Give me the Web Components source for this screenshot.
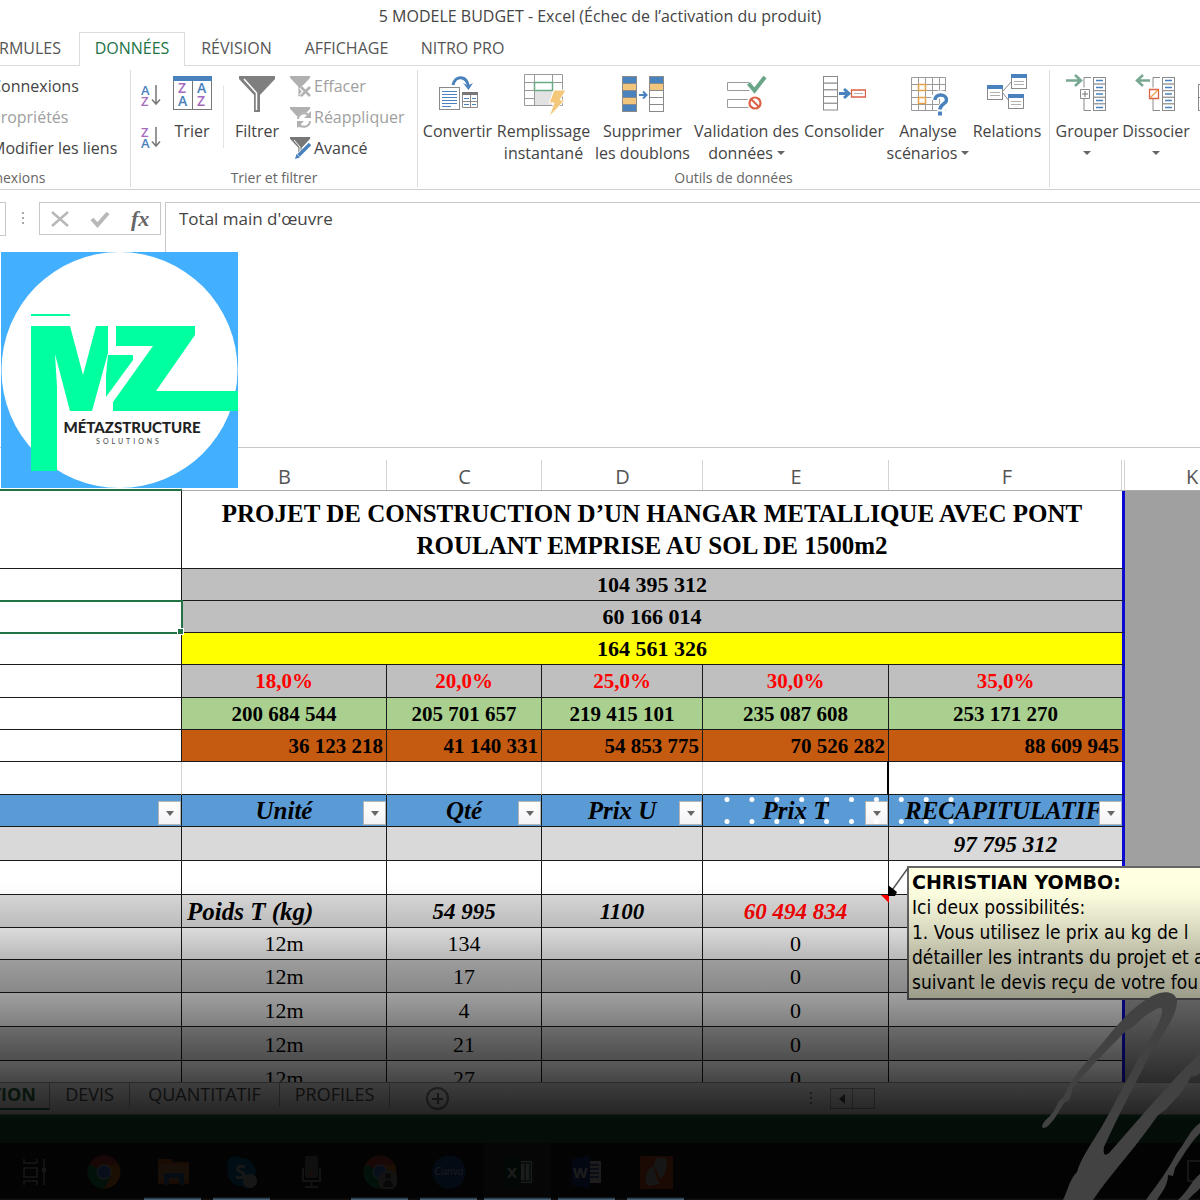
<!DOCTYPE html>
<html lang="fr">
<head>
<meta charset="utf-8">
<title>5 MODELE BUDGET - Excel</title>
<meta name="viewport" content="width=device-width, initial-scale=1">
<style>
  html, body { margin: 0; height: 100%; }
  body { font-family: "Open Sans", "Noto Sans", sans-serif; color: #444; background: #fff; overflow: hidden; }
</style>
</head>
<body>
<excel-window></excel-window>

<script>
const define = (name, html, setup) => {
  const template = document.createElement('template');
  template.innerHTML = html;
  customElements.define(name, class extends HTMLElement {
    connectedCallback() {
      if (this.shadowRoot) return;
      this.attachShadow({ mode: 'open' }).appendChild(template.content.cloneNode(true));
      if (setup) setup(this, this.shadowRoot);
    }
  });
};

/* ---------- icons ---------- */
const funnel = (c) => `<path fill="${c}" d="M0 0h36v3L21 19v17h-6V19L0 3z"/>`;
const rows = (x, y, w, n, h, fills) => Array.from({ length: n }, (_, i) =>
  `<rect x="${x}" y="${y + i * h}" width="${w}" height="${h}" fill="${(fills && fills[i]) || '#fff'}" stroke="#8a8a8a"/>`).join('');
const win = (x, y) => `<rect x="${x}.5" y="${y}.5" width="15" height="14" fill="#fff" stroke="#8a8a8a"/><path fill="#4a82bd" d="M${x} ${y}h16v4h-16z"/><path stroke="#b0b0b0" d="M${x + 3} ${y + 7.5}h10M${x + 3} ${y + 10.5}h10"/>`;
const outline = (extra) => `<path fill="none" stroke="#8a8a8a" d="M25 3.500h-7v10M18 24v12.500h7"/>${rows(27.5, 3.5, 12, 5, 6.6)}<path stroke="#4a82bd" stroke-width="1.300" d="M30 6.500h7M30 13.500h7M30 20h7M30 26.500h7M30 33.500h7"/>${extra}`;
const chrome = `<circle cx="17" cy="17" r="16.500" fill="#db4437"/><path fill="#0f9d58" d="M17 17L2.700 8.700A16.500 16.500 0 0 0 17 33.500l7-12z"/><path fill="#f58a20" d="M17 17l8 4-8 12.500A16.500 16.500 0 0 0 31.500 9.500H17z"/><circle cx="17" cy="17" r="7.500" fill="#ddd"/><circle cx="17" cy="17" r="6.500" fill="#4285f4"/>`;
const ICONS = {
  'sort-az': [20, 24, `<g font-family="Open Sans" font-weight="600" font-size="13"><text x="0" y="11" fill="#4a82bd">A</text><text x="0" y="22" fill="#a66bbe">Z</text></g><path fill="none" stroke="#777" stroke-width="1.500" d="M15 1v18M11 15.500l4 4.500 4-4.500"/>`],
  'sort-za': [20, 24, `<g font-family="Open Sans" font-weight="600" font-size="13"><text x="0" y="11" fill="#a66bbe">Z</text><text x="0" y="22" fill="#4a82bd">A</text></g><path fill="none" stroke="#777" stroke-width="1.500" d="M15 1v18M11 15.500l4 4.500 4-4.500"/>`],
  sort: [40, 40, `<rect x="1.500" y="2.500" width="38" height="33" fill="#fff" stroke="#777"/><path fill="#4a82bd" d="M1 2h39v5H1z"/><path stroke="#777" d="M20.500 7v28"/><g font-family="Open Sans" font-weight="600" font-size="14"><text x="6" y="19" fill="#a66bbe">Z</text><text x="6" y="32" fill="#4a82bd">A</text><text x="25" y="19" fill="#4a82bd">A</text><text x="25" y="32" fill="#a66bbe">Z</text></g>`],
  filter: [40, 40, `<g transform="translate(2 2)">${funnel('#7f7f7f')}</g><path fill="none" stroke="#fff" stroke-width="1.500" d="M7 5l12.500 14v17"/>`],
  clear: [22, 22, `<g transform="translate(0 1) scale(.56)">${funnel('#b0b0b0')}</g><path stroke="#fff" stroke-width="5" d="M11 12l9 9M20 12l-9 9"/><path stroke="#b0b0b0" stroke-width="2.500" d="M11 12l9 9M20 12l-9 9"/>`],
  reapply: [22, 22, `<g transform="translate(0 1) scale(.56)">${funnel('#b0b0b0')}</g><circle cx="14" cy="14" r="7.500" fill="#fff"/><path fill="none" stroke="#b0b0b0" stroke-width="2" d="M8 13a6 6 0 0 1 11-3M20 15a6 6 0 0 1-11 3"/><path fill="#b0b0b0" d="M21 5v7h-7zM7 22v-7h7z"/>`],
  advanced: [22, 22, `<g transform="translate(0 0) scale(.56)">${funnel('#777')}</g><path fill="none" stroke="#fff" d="M4 3l6 7v10"/><path stroke="#fff" stroke-width="6" d="M8 20L20 8"/><path stroke="#4a82bd" stroke-width="3.500" d="M8.500 18.500L20 7"/><path fill="#4a82bd" d="M5 22l1.500-5 3.500 3.500z"/>`],
  convert: [40, 40, `<rect x="1.500" y="13.500" width="20" height="22" fill="#fff" stroke="#8a8a8a"/><path stroke="#4a82bd" d="M4 17.500h15M4 20.500h15M4 23.500h15M4 26.500h15M4 29.500h15M4 32.500h9"/><path fill="#fff" stroke="#8a8a8a" d="M24.500 18.500h15v15h-15zM32.500 18v15M24 27.500h16"/><path fill="#777" d="M24 18h16v3H24z"/><path stroke="#4a82bd" d="M26 24.500h5M34 24.500h4M26 30.500h5M34 30.500h4"/><path fill="none" stroke="#4a82bd" stroke-width="3" d="M15 11C17 1 29 1 30.500 13"/><path fill="#4a82bd" d="M25 9l5 2.500L35 9l-4.500 7z"/>`],
  flash: [42, 44, `<path fill="#fff" stroke="#9a9a9a" d="M1.500.5h38v31h-38zM1 8.500h38M1 16.500h38M1 24.500h10M11.500 0v31M29.500 0v16"/><path fill="#e2e2e2" d="M12 17h17v14H12z"/><path fill="#fff" stroke="#6aaa85" stroke-width="1.500" d="M11.500 8.500h18v8h-18z"/><path fill="#f3c87a" stroke="#fff" d="M31 16h12l-6 10h5L26 43l5-14h-5z"/>`],
  dedupe: [44, 40, `${rows(1.5, 2.5, 14, 5, 7, ['#4a82bd', '#f1c67c', '#4a82bd', '#f1c67c', '#4a82bd'])}${rows(28.5, 2.5, 14, 5, 7, ['#4a82bd', '#f1c67c'])}<path fill="none" stroke="#4a82bd" stroke-width="2" d="M18 21h7M22 17.500l3.500 3.500-3.500 3.500"/>`],
  validate: [42, 40, `<path fill="#fff" stroke="#9a9a9a" d="M1.500 8.500h24v8h-24zM1.500 25.500h24v8h-24z"/><path fill="none" stroke="#fff" stroke-width="7" d="M22 10l7 7L39 3"/><path fill="none" stroke="#6aa588" stroke-width="4" d="M22.500 9.500l6 7L39 3"/><circle cx="29" cy="29" r="8" fill="#fff"/><circle cx="29" cy="29" r="5.500" fill="#fff" stroke="#dd6145" stroke-width="2.200"/><path stroke="#dd6145" stroke-width="2" d="M25 25l8 8"/>`],
  consolidate: [44, 40, `${rows(1.5, 2.500, 14, 5, 6.700)}<path fill="none" stroke="#4a82bd" stroke-width="3" d="M17 19.500h9M22 15l5 4.500-5 4.500"/><path fill="#fff" stroke="#dd6145" stroke-width="1.300" d="M29.500 16h14v7h-14z"/><path stroke="#b0b0b0" d="M32 19.500h9"/>`],
  whatif: [40, 42, `<path fill="#fff" stroke="#9a9a9a" d="M3.500 3.500h34v33h-34zM10.500 3v33M17.500 3v33M24.500 3v33M31.500 3v33M3 10.500h34M3 16.500h34M3 23.500h34M3 30.500h34"/><path fill="#fff" stroke="#e6a24a" stroke-width="1.500" d="M10.500 10.500h7v6h-7zM10.500 23.500h7v6h-7z"/><path fill="none" stroke="#fff" stroke-width="8" d="M27 26c0-8 13-7 12 0-.5 4-6 4-6 14"/><path fill="none" stroke="#4a82bd" stroke-width="3.500" d="M27 26c0-7 11.500-6.500 11.500 0 0 4-6.500 4-6.500 9.500"/><path fill="#4a82bd" d="M30 37.500h4v4h-4z"/>`],
  relations: [42, 40, `<path fill="none" stroke="#8a8a8a" d="M16 18L26 7M16 18l8 10"/>${win(1, 11)}${win(25, 0)}${win(22, 20)}`],
  group: [42, 40, outline(`<path fill="#fff" stroke="#8a8a8a" d="M14.500 15.500h9v9h-9z"/><path stroke="#777" d="M16 20h6M19 17v6"/><path fill="none" stroke="#78a892" stroke-width="2.500" d="M0 6.500h14M9 1l6 5.500L9 12"/>`)],
  ungroup: [42, 40, outline(`<path fill="#fff" stroke="#dd6145" stroke-width="1.300" d="M14.500 15.500h9v9h-9z"/><path stroke="#e6a24a" stroke-width="1.300" d="M15 24l8-8"/><path fill="none" stroke="#78a892" stroke-width="2.500" d="M2 6.500h13M8 1L2 6.500 8 12"/>`)],
  subtotal: [80, 40, rows(0.5, 10.5, 40, 2, 13)],
  cancel: [18, 18, `<path stroke="#b8b8b8" stroke-width="2.500" d="M1 2l16 14M17 2L1 16"/>`],
  enter: [20, 18, `<path fill="none" stroke="#b8b8b8" stroke-width="4" d="M2 9l5.500 6L18 3"/>`],
  task: [32, 34, `<path fill="none" stroke="#ccc" stroke-width="1.500" d="M5 4v4h13V4M5 13h13v9H5zM5 30v-4h13v4M25 4v26"/><path fill="#ccc" d="M23 13h4v4h-4z"/>`],
  chrome: [34, 34, chrome],
  chrome2: [34, 34, chrome + `<circle cx="25" cy="25" r="10" fill="#aaa"/><circle cx="25" cy="21" r="3" fill="#444"/><path fill="#444" d="M20 32c0-9 10-9 10 0z"/>`],
  folder: [34, 34, `<path fill="#e8601c" d="M2 4h13l2 3h16v22H2z"/><path fill="#d98a4a" d="M2 9h31v17H2z"/><path fill="#2a6da8" d="M8 18h20v12h-5v-7H13v7H8z"/>`],
  skype: [34, 34, `<circle cx="11" cy="10" r="9" fill="#0a78b8"/><circle cx="22" cy="24" r="9" fill="#0a78b8"/><circle cx="16.500" cy="17" r="14" fill="#0a78b8"/><text x="10" y="24" font-family="Open Sans" font-weight="700" font-size="20" fill="#ddd">S</text><circle cx="25" cy="26" r="7" fill="#ccc"/>`],
  mic: [34, 34, `<rect x="11" y="1" width="13" height="22" rx="2" fill="#8a8a92"/><path fill="none" stroke="#aaa" stroke-width="2" d="M9 13v13h17V13M17.500 26v6M11 32h13"/><path fill="#f05a28" d="M15 17h5l-2.500 4z"/>`],
  canva: [34, 34, `<circle cx="17" cy="17" r="16.500" fill="#1a5fb8"/><text x="17" y="20" text-anchor="middle" font-family="Lato" font-style="italic" font-size="11" fill="#cfe6ff">Canva</text>`],
  excel: [34, 34, `<path fill="#fff" d="M17 6h14v22H17z"/><path fill="none" stroke="#217346" stroke-width="1.500" d="M19 8h10v18H19zM24 8v18"/><path fill="#134d2c" d="M2 4l18-3v32L2 30z"/><text x="6" y="23" font-family="Open Sans" font-weight="700" font-size="15" fill="#fff">X</text>`],
  word: [34, 34, `<path fill="#fff" d="M17 6h14v22H17z"/><path stroke="#2b579a" stroke-width="1.500" d="M20 10h9M20 14h9M20 18h9M20 22h9"/><path fill="#1c3f9a" d="M2 4l18-3v32L2 30z"/><text x="3" y="23" font-family="Open Sans" font-weight="700" font-size="15" fill="#fff">W</text>`],
  nitro: [34, 34, `<path fill="#f0581a" d="M1 1h33v33H1z"/><path fill="#ccc" d="M7 29c-1-7 1-16 8-18l1 6 4 12-10 2zM17 3c4-1 8 0 11 1-1 8 0 15-7 20l-3-8-3-5z"/>`],
};
customElements.define('ui-icon', class extends HTMLElement {
  connectedCallback() {
    if (this.shadowRoot) return;
    const [w, h, body] = ICONS[this.getAttribute('name')];
    this.attachShadow({ mode: 'open' }).innerHTML =
      `<style>:host{display:inline-flex;flex:none}svg{display:block}</style><svg width="${w}" height="${h}" viewBox="0 0 ${w} ${h}" aria-hidden="true">${body}</svg>`;
  }
});

/* ---------- ribbon ---------- */
define('title-bar', `<style>
  :host { display: block; height: 32px; line-height: 32px; text-align: center; font-size: 16px; }
</style><slot></slot>`);

define('ribbon-tabs', `<style>
  :host { display: block; overflow: hidden; }
  nav { display: flex; height: 33px; margin-left: -36px; border-bottom: 1px solid #dcdcdc; }
  a { box-sizing: border-box; height: 34px; line-height: 33px; font-size: 16px; color: #555; text-decoration: none; white-space: nowrap; text-align: center; }
  a[aria-current] { color: #217346; background: #fff; border: 1px solid #dcdcdc; border-bottom: 0; line-height: 31px; }
  .t1 { width: 115px; padding-right: 18px; text-align: right; } .t2 { width: 106px; } .t3 { width: 103px; } .t4 { width: 117px; } .t5 { width: 115px; }
</style>
<nav aria-label="Ruban"><a class="t1" href="#formules">FORMULES</a><a class="t2" href="#donnees" aria-current="page">DONNÉES</a><a class="t3" href="#revision">RÉVISION</a><a class="t4" href="#affichage">AFFICHAGE</a><a class="t5" href="#nitro">NITRO PRO</a></nav>`);

define('ribbon-group', `<style>
  :host { display: flex; flex-direction: column; box-sizing: border-box; flex: none; height: 117px; border-right: 1px solid #dcdcdc; }
  .items { display: flex; flex: 1; }
  .label { text-align: center; font-size: 14px; line-height: 18px; color: #666; white-space: nowrap; min-height: 18px; }
</style><div class="items"><slot></slot></div><div class="label"></div>`,
  (el, root) => { root.querySelector('.label').textContent = el.getAttribute('label') || ''; });

define('ribbon-button', `<style>
  :host { display: block; flex: none; }
  button { display: flex; flex-direction: column; align-items: center; width: 100%; padding: 4px 0 0; border: 0; background: none; font: inherit; font-size: 16px; line-height: 22px; color: #444; white-space: nowrap; }
  .icon { display: flex; height: 46px; }
  .arrow::after { content: ""; display: inline-block; border: 4px solid transparent; border-top-color: #666; border-bottom: 0; margin-left: 4px; vertical-align: 4px; }
  .bare::after { margin-left: 0; }
</style><button type="button"><span class="icon"></span></button>`,
  (el, root) => {
    const icon = document.createElement('ui-icon');
    icon.setAttribute('name', el.getAttribute('icon'));
    root.querySelector('.icon').append(icon);
    const lines = el.getAttribute('label').split('|');
    lines.forEach((t, i) => {
      const s = document.createElement('span');
      s.textContent = t;
      if (el.hasAttribute('menu') && i === lines.length - 1) s.className = t ? 'arrow' : 'arrow bare';
      root.querySelector('button').append(s);
    });
  });

define('ribbon-command', `<style>
  :host { display: block; }
  button { display: flex; align-items: center; gap: 2px; height: 31px; padding: 0; border: 0; background: none; font: inherit; font-size: 16px; color: #444; white-space: nowrap; }
  button:disabled { color: #a0a0a0; }
</style><button type="button"><slot name="icon"></slot><slot></slot></button>`,
  (el, root) => { root.querySelector('button').disabled = el.hasAttribute('disabled'); });

define('ribbon-bar', `<style>
  :host { display: flex; overflow: hidden; padding-top: 4px; box-sizing: border-box; border-bottom: 1px solid #d0d0d0; height: 124px; }
  .links { width: 247px; margin-left: -116px; }
  .filters { width: 287px; } .tools { width: 632px; } .plan { width: 300px; }
  .stack { display: flex; flex-direction: column; }
  .linklist { padding-left: 107px; }
  .sorts { padding: 14px 0 0 10px; gap: 18px; }
  .sorts button { display: block; height: 24px; padding: 0; border: 0; background: none; }
  .sep { width: 1px; height: 62px; margin: 16px 0 0; background: #e3e3e3; }
  .pad { padding-left: 3px; }
</style>
<ribbon-group class="links" label="Connexions"><div class="stack linklist">
  <ribbon-command>Connexions</ribbon-command><ribbon-command disabled>Propriétés</ribbon-command><ribbon-command>Modifier les liens</ribbon-command></div></ribbon-group>
<ribbon-group class="filters" label="Trier et filtrer">
  <div class="stack sorts"><button type="button" aria-label="Trier de A à Z"><ui-icon name="sort-az"></ui-icon></button><button type="button" aria-label="Trier de Z à A"><ui-icon name="sort-za"></ui-icon></button></div>
  <ribbon-button style="width:62px" icon="sort" label="Trier"></ribbon-button>
  <div class="sep"></div>
  <ribbon-button style="width:66px" icon="filter" label="Filtrer"></ribbon-button>
  <div class="stack"><ribbon-command disabled><ui-icon slot="icon" name="clear"></ui-icon>Effacer</ribbon-command><ribbon-command disabled><ui-icon slot="icon" name="reapply"></ui-icon>Réappliquer</ribbon-command><ribbon-command><ui-icon slot="icon" name="advanced"></ui-icon>Avancé</ribbon-command></div>
</ribbon-group>
<ribbon-group class="tools" label="Outils de données"><span class="pad"></span>
  <ribbon-button style="width:73px" icon="convert" label="Convertir"></ribbon-button>
  <ribbon-button style="width:99px" icon="flash" label="Remplissage|instantané"></ribbon-button>
  <ribbon-button style="width:99px" icon="dedupe" label="Supprimer|les doublons"></ribbon-button>
  <ribbon-button style="width:109px" icon="validate" label="Validation des|données" menu></ribbon-button>
  <ribbon-button style="width:86px" icon="consolidate" label="Consolider"></ribbon-button>
  <ribbon-button style="width:82px" icon="whatif" label="Analyse|scénarios" menu></ribbon-button>
  <ribbon-button style="width:76px" icon="relations" label="Relations"></ribbon-button>
</ribbon-group>
<ribbon-group class="plan"><span class="pad"></span>
  <ribbon-button style="width:68px" icon="group" label="Grouper|" menu></ribbon-button>
  <ribbon-button style="width:70px" icon="ungroup" label="Dissocier|" menu></ribbon-button>
  <ribbon-button style="width:94px" icon="subtotal" label="Sous-total"></ribbon-button>
</ribbon-group>`);

define('formula-bar', `<style>
  :host { display: flex; height: 257px; padding-top: 12px; box-sizing: border-box; align-items: flex-start; }
  .name { box-sizing: border-box; width: 6px; height: 34px; border: 1px solid #c8c8c8; border-left: 0; }
  .dots { display: flex; flex-direction: column; gap: 3px; width: 33px; padding-top: 10px; align-items: center; }
  .dots i { width: 2px; height: 2px; background: #aaa; }
  .actions { display: flex; align-items: center; justify-content: space-around; box-sizing: border-box; width: 122px; height: 33px; border: 1px solid #c8c8c8; }
  .actions button { display: flex; padding: 0; border: 0; background: none; color: #666; font: italic 700 22px "Liberation Serif", serif; line-height: 28px; }
  label { flex: 1; align-self: stretch; margin-left: 4px; border: solid #c8c8c8; border-width: 1px 0 0 1px; }
  input { width: 100%; box-sizing: border-box; height: 30px; padding: 0 13px; border: 0; outline: 0; background: none; font: 17px "Open Sans", sans-serif; color: #444; }
</style>
<div class="name"></div><div class="dots"><i></i><i></i><i></i></div>
<div class="actions"><button type="button" aria-label="Annuler"><ui-icon name="cancel"></ui-icon></button><button type="button" aria-label="Entrer"><ui-icon name="enter"></ui-icon></button><button type="button">fx</button></div>
<label><input type="text" aria-label="Barre de formule" value="Total main d'œuvre"></label>`);

/* ---------- floating logo ---------- */
define('brand-logo', `<style>
  :host { display: block; position: absolute; left: 1px; top: 252px; width: 237px; height: 237px; }
  svg { display: block; }
</style>
<svg width="237" height="237" viewBox="0 0 237 237" role="img" aria-label="Métazstructure Solutions">
  <path fill="#42afff" d="M0 0h237v236H0z"/><circle cx="118.500" cy="118" r="118" fill="#fff"/>
  <g fill="#00ff9f">
    <path d="M30 62h39v2H30z"/>
    <path d="M30 74h39l13 49 13-49h12v27l-16 58H69L54 102l2 33v84H30z"/>
    <path d="M115 74h79v9l-39 56h82v20H112v-9l40-56h-37z"/>
    <path d="M107 103h25v5l-27 37v-22z"/>
  </g>
  <text x="131" y="181" text-anchor="middle" font-family="Lato" font-weight="900" font-size="15" fill="#222">MÉTAZSTRUCTURE</text>
  <text x="128" y="192" text-anchor="middle" font-family="Lato" font-size="7" letter-spacing="3" fill="#444">SOLUTIONS</text>
</svg>`);

/* ---------- worksheet ---------- */
define('filter-button', `<style>
  :host { display: block; position: absolute; right: 0; bottom: 1px; }
  button { display: grid; place-items: center; width: 23px; height: 24px; padding: 0; border: 1px solid #b5b5b5; background: linear-gradient(#fff, #f3f3f7); }
  button::after { content: ""; border: 4px solid transparent; border-top: 5px solid #666; border-bottom: 0; }
</style><button type="button" aria-label="Filtrer la colonne"></button>`);

define('cell-note', `<style>
  :host { display: block; position: absolute; left: 881px; right: 0; top: 866px; }
  svg { position: absolute; left: 0; top: 0; }
  .box { margin-left: 26px; height: 134px; box-sizing: border-box; padding: 2px 0 0 3px; border: 2px solid #666; border-right: 0; background: #ffffe1; color: #000; font: 19px/25px "DejaVu Sans Condensed", "Noto Sans", sans-serif; white-space: nowrap; overflow: hidden; }
  p { margin: 0; }
  b { font-family: "DejaVu Sans", sans-serif; }
</style>
<svg width="28" height="40" viewBox="0 0 28 40" aria-hidden="true"><path fill="#f00" d="M0 29h8v8z"/><path stroke="#555" stroke-width="1.500" d="M9 27L27 2"/><path fill="#000" d="M7 30V19l9 7-2 4z"/></svg>
<div class="box"><p><b>CHRISTIAN YOMBO:</b></p><p>Ici deux possibilités:</p><p>1. Vous utilisez le prix au kg de l</p><p>détailler les intrants du projet et a</p><p>suivant le devis reçu de votre fou</p></div>`);

define('dot-pattern', `<style>
  :host { display: block; position: absolute; left: 724px; top: 796px; width: 230px; height: 28px; pointer-events: none; }
  svg { display: block; }
</style><svg width="230" height="28" viewBox="0 0 230 28" aria-hidden="true"></svg>`,
  (el, root) => {
    root.querySelector('svg').innerHTML = Array.from({ length: 10 }, (_, i) =>
      `<circle cx="${3 + i * 24.9}" cy="3.500" r="2.500" fill="#fff"/><circle cx="${3 + i * 24.9}" cy="25.500" r="2.500" fill="#fff"/>`).join('');
  });

define('work-sheet', `<style>
  :host { display: flex; flex: 1; min-height: 0; overflow: hidden; background: #a0a0a0; border-top: 1px solid #c8c8c8; }
  table { flex: none; width: 1125px; table-layout: fixed; border-collapse: separate; border-spacing: 0; background: #fff; color: #000; font: 700 21px/32px "Liberation Serif", serif; }
  .rest { flex: 1; }
  .rest div { height: 43px; box-sizing: border-box; overflow: hidden; background: #fff; border-bottom: 1px solid #ababab; font: 20px/58px "Open Sans", sans-serif; color: #555; padding-left: 61px; white-space: nowrap; }
  th, td { box-sizing: border-box; padding: 0 3px; border: solid #1a1a1a; border-width: 0 1px 1px 0; text-align: center; overflow: hidden; white-space: nowrap; position: relative; }
  tbody tr > :last-child { border-right: 3px solid #0a0ad0; }
  thead th { height: 43px; font: 20px/27px "Open Sans", sans-serif; color: #555; vertical-align: bottom; padding: 0; border-right: 0; border-color: #ababab; background: linear-gradient(#d4d4d4, #d4d4d4) right bottom / 1px 30px no-repeat; }
  thead th:first-child { border-bottom: 2px solid #217346; }
  thead th:last-child { background: linear-gradient(#d4d4d4, #d4d4d4) right bottom / 1px 30px no-repeat, linear-gradient(#d4d4d4, #d4d4d4) right 3px bottom / 1px 30px no-repeat; }
  .title td { height: 78px; font-size: 25px; white-space: normal; }
  .r td { height: 32px; padding-top: 1px; line-height: 30px; }
  .r33 td { height: 33px; padding-top: 1px; line-height: 31px; }
  .r34 td { height: 34px; padding-top: 2px; line-height: 31px; }
  .g td + td { background: #bfbfbf; } .y td + td { background: #ff0; }
  .total td { font-size: 22px; }
  .pct td { color: #f00; }
  .green td + td { background: #a9d08e; }
  .orange td + td { background: #c55a11; text-align: right; padding: 1px 3px 0; }
  .blank td { border-right-color: #d4d4d4; } .blank td:nth-child(5) { border-right: 2px solid #000; }
  .head th { background: #5b9bd5; height: 32px; line-height: 31px; font-size: 25px; font-style: italic; }
  .gray td { background: #d9d9d9; }
  .it td { font-style: italic; font-size: 23px; } .it .left { text-align: left; padding-left: 5px; font-size: 25px; } .red { color: #f00; }
  .plain td { font-weight: 400; font-size: 22px; }
  .selected { position: absolute; inset: -1px -2px -2px -2px; border: 2px solid #217346; z-index: 2; }
  .selected::after { content: ""; position: absolute; right: -3px; bottom: -3px; width: 5px; height: 5px; border: 1px solid #fff; background: #217346; }
  .r .wrap { overflow: visible; z-index: 2; }
  .wide { padding: 0 0 0 16px; text-align: left; }
</style>
<table>
<colgroup><col style="width:182px"><col style="width:205px"><col style="width:155px"><col style="width:161px"><col style="width:186px"><col></colgroup>
<thead><tr><th></th><th>B</th><th>C</th><th>D</th><th>E</th><th>F</th></tr></thead>
<tbody>
<tr class="title"><td></td><td colspan="5">PROJET DE CONSTRUCTION D’UN HANGAR METALLIQUE AVEC PONT<br>ROULANT EMPRISE AU SOL DE 1500m2</td></tr>
<tr class="r g total"><td></td><td colspan="5">104 395 312</td></tr>
<tr class="r g total"><td class="wrap"><div class="selected"></div></td><td colspan="5">60 166 014</td></tr>
<tr class="r y total"><td></td><td colspan="5">164 561 326</td></tr>
<tr class="r33 g pct"><td></td><td>18,0%</td><td>20,0%</td><td>25,0%</td><td>30,0%</td><td>35,0%</td></tr>
<tr class="r green"><td></td><td>200 684 544</td><td>205 701 657</td><td>219 415 101</td><td>235 087 608</td><td>253 171 270</td></tr>
<tr class="r orange"><td></td><td>36 123 218</td><td>41 140 331</td><td>54 853 775</td><td>70 526 282</td><td>88 609 945</td></tr>
<tr class="r33 blank"><td></td><td></td><td></td><td></td><td></td><td></td></tr>
<tr class="head"><th><filter-button></filter-button></th><th>Unité<filter-button></filter-button></th><th>Qté<filter-button></filter-button></th><th>Prix U<filter-button></filter-button></th><th>Prix T<filter-button></filter-button></th><th class="wide">RECAPITULATIF<filter-button></filter-button></th></tr>
<tr class="r34 gray it"><td></td><td></td><td></td><td></td><td></td><td>97 795 312</td></tr>
<tr class="r34"><td></td><td></td><td></td><td></td><td></td><td></td></tr>
<tr class="r33 gray it"><td></td><td class="left">Poids T (kg)</td><td>54 995</td><td>1100</td><td class="red">60 494 834</td><td></td></tr>
<tr class="r plain"><td></td><td>12m</td><td>134</td><td></td><td>0</td><td></td></tr>
<tr class="r33 gray plain"><td></td><td>12m</td><td>17</td><td></td><td>0</td><td></td></tr>
<tr class="r34 plain"><td></td><td>12m</td><td>4</td><td></td><td>0</td><td></td></tr>
<tr class="r34 gray plain"><td></td><td>12m</td><td>21</td><td></td><td>0</td><td></td></tr>
<tr class="r34 plain"><td></td><td>12m</td><td>27</td><td></td><td>0</td><td></td></tr>
</tbody></table>
<div class="rest"><div>K</div></div>`);

define('sheet-tabs', `<style>
  :host { display: flex; flex: none; height: 33px; box-sizing: border-box; border-top: 1px solid #999; border-bottom: 1px solid #999; background: #e6e6e6; overflow: hidden; font-size: 18px; }
  a { box-sizing: border-box; height: 24px; margin-bottom: 8px; line-height: 23px; text-align: center; border-right: 1px solid #999; color: #444; text-decoration: none; white-space: nowrap; }
  a[aria-current] { height: 27px; width: 180px; margin-left: -130px; padding-right: 13px; text-align: right; font-weight: 700; color: #1d5c3a; border-bottom: 2px solid #217346; }
  .a { width: 80px; } .b { width: 150px; } .c { width: 110px; }
  .add { margin: 4px 0 0 36px; width: 23px; height: 23px; padding: 0; border: 2px solid #777; border-radius: 50%; background: linear-gradient(#666, #666) center / 11px 2px no-repeat, linear-gradient(#666, #666) center / 2px 11px no-repeat; }
  .dots { display: flex; flex-direction: column; gap: 3px; margin: 9px 18px 0 auto; } .dots i { width: 2px; height: 2px; background: #777; }
  .scroll { display: flex; width: 370px; padding-top: 5px; }
  .scroll button { box-sizing: border-box; display: grid; place-items: center; width: 23px; height: 21px; padding: 0; border: 1px solid #999; background: #e0e0e0; margin-right: -1px; }
  .scroll button:first-child::after { content: ""; border: 5px solid transparent; border-right: 6px solid #444; border-left: 0; }
</style>
<a href="#estimation" aria-current="page">ESTIMATION</a><a class="a" href="#devis">DEVIS</a><a class="b" href="#quantitatif">QUANTITATIF</a><a class="c" href="#profiles">PROFILES</a>
<button class="add" type="button" aria-label="Nouvelle feuille"></button>
<div class="dots"><i></i><i></i><i></i></div>
<div class="scroll"><button type="button" aria-label="Défiler à gauche"></button><button type="button" aria-label="Barre de défilement"></button></div>`);

define('task-item', `<style>
  :host { display: block; flex: none; width: 69px; height: 100%; }
  button { display: flex; align-items: center; justify-content: center; box-sizing: border-box; width: 57px; height: 100%; margin: 0 6px; padding: 3px 0 0; border: 0; background: none; border-bottom: 3px solid transparent; }
  :host([open]) button { border-bottom-color: #8ec4f0; }
  :host([active]) button { width: 67px; margin: 0 1px; background: #3a3a3a; }
</style><button type="button"><slot></slot></button>`,
  (el, root) => root.querySelector('button').setAttribute('aria-label', el.getAttribute('label')));

define('task-bar', `<style>
  :host { display: flex; flex: none; height: 57px; background: #1e1e1e; overflow: hidden; }
  .tray { margin: 17px 0 0 auto; width: 13px; height: 22px; box-sizing: border-box; border: 2px solid #ccc; border-right: 0; }
</style>
<task-item label="Affichage des tâches"><ui-icon name="task"></ui-icon></task-item>
<task-item label="Chrome"><ui-icon name="chrome"></ui-icon></task-item>
<task-item label="Explorateur" open><ui-icon name="folder"></ui-icon></task-item>
<task-item label="Skype" open><ui-icon name="skype"></ui-icon></task-item>
<task-item label="Enregistreur"><ui-icon name="mic"></ui-icon></task-item>
<task-item label="Chrome, profil" open><ui-icon name="chrome2"></ui-icon></task-item>
<task-item label="Canva" open><ui-icon name="canva"></ui-icon></task-item>
<task-item label="Excel" open active><ui-icon name="excel"></ui-icon></task-item>
<task-item label="Word" open><ui-icon name="word"></ui-icon></task-item>
<task-item label="Nitro" open><ui-icon name="nitro"></ui-icon></task-item>
<div class="tray"></div>`);

define('bottom-shade', `<style>
  :host { display: block; position: absolute; left: 0; right: 0; bottom: 0; height: 320px; pointer-events: none;
    background: linear-gradient(rgba(0,0,0,0) 0, rgba(0,0,0,.02) 15px, rgba(0,0,0,.14) 48px, rgba(0,0,0,.28) 79px, rgba(0,0,0,.37) 112px, rgba(0,0,0,.5) 146px, rgba(0,0,0,.64) 180px, rgba(0,0,0,.73) 202px, rgba(0,0,0,.84) 234px, rgba(0,0,0,.89) 242px, rgba(0,0,0,.89) 318px, rgba(0,0,0,.5) 319px, rgba(0,0,0,.5) 320px); }
</style>`);

define('brush-stroke', `<style>
  :host { display: block; position: absolute; right: 0; bottom: 0; width: 160px; height: 210px; pointer-events: none; }
  svg { display: block; }
</style>
<svg width="160" height="210" viewBox="0 0 160 210" aria-hidden="true"><g fill="#424242">
  <path d="M2 136C4 130 9 128 13 122C17 117 17 112 21 109C26 106 26 99 31 92C40 79 50 67 60 56C75 38 90 18 112 6C122 1 134 0 137 10C138 26 121 45 110 65C95 94 77 128 64 157C63 163 64 168 70 162C100 128 128 94 160 63V83C156 86 155 87 151 86C146 98 137 108 128 117C124 122 119 123 116 128C98 154 78 176 60 200L53 210H23C28 199 30 189 37 182C41 168 53 151 61 138C74 115 88 88 100 65C108 50 123 32 122 19C120 16 114 20 110 23C100 28 95 38 87 40C75 52 50 77 33 98C31 101 32 107 28 111C24 112 23 115 21 118C16 127 8 139 3 138Z"/>
  <path d="M160 133C151 138 144 155 137 163C134 168 130 176 127 180C121 190 112 201 106 210H117C121 203 128 196 128 185L133 186L135 178C142 167 151 152 160 143Z"/>
  <path d="M160 184C152 190 149 200 138 210H148C153 204 157 202 160 198Z"/>
</g></svg>`);

define('excel-window', `<style>
  :host { display: flex; flex-direction: column; position: relative; height: 100vh; overflow: hidden; background: #fff; }
  .status { flex: none; height: 28px; background: #217346; }
</style>
<title-bar>5 MODELE BUDGET - Excel (Échec de l’activation du produit)</title-bar>
<ribbon-tabs></ribbon-tabs>
<ribbon-bar></ribbon-bar>
<formula-bar></formula-bar>
<work-sheet></work-sheet>
<sheet-tabs></sheet-tabs>
<div class="status"></div>
<task-bar></task-bar>
<brand-logo></brand-logo>
<dot-pattern></dot-pattern>
<cell-note></cell-note>
<bottom-shade></bottom-shade>
<brush-stroke></brush-stroke>`);
</script>
</body>
</html>
